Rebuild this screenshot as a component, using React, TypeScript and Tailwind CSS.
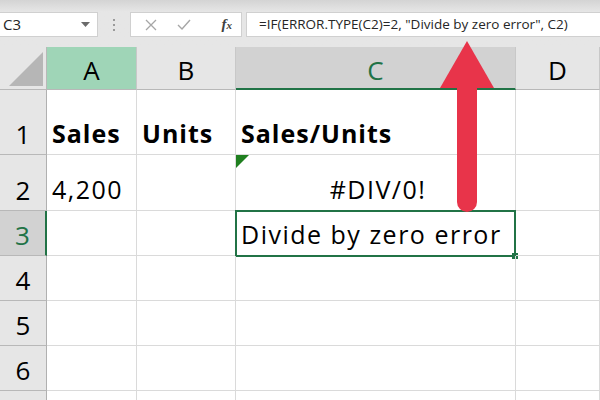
import React from "react";

const cols = ["A", "B", "C", "D"];

const rows: { n: number; h: string; cells: React.ReactNode[] }[] = [
  {
    n: 1,
    h: "h-[65px]",
    cells: [
      <span className="font-bold tracking-[1px]">Sales</span>,
      <span className="font-bold tracking-[1px]">Units</span>,
      <span className="font-bold tracking-[1px]">Sales/Units</span>,
      null,
    ],
  },
  { n: 2, h: "h-[56px]", cells: ["4,200", null, "#DIV/0!", null] },
  { n: 3, h: "h-[45px]", cells: [null, null, "Divide by zero error", null] },
  { n: 4, h: "h-[45px]", cells: [null, null, null, null] },
  { n: 5, h: "h-[45px]", cells: [null, null, null, null] },
  { n: 6, h: "h-[45px]", cells: [null, null, null, null] },
  { n: 7, h: "h-[45px]", cells: [null, null, null, null] },
];

function Toolbar() {
  return (
    <div className="h-[47px] bg-linear-to-b from-[#d4d4d4] via-[#e6e6e6] via-25% to-[#e6e6e6] flex items-start pt-[12px]">
      {/* name box */}
      <div className="w-[98px] h-[25px] bg-white border border-[#d0d0d0] border-l-0 flex items-center justify-between pl-[3px] pr-[7px]">
        <span className="text-[15px] text-[#262626] leading-none">C3</span>
        <svg width="9" height="5" viewBox="0 0 9 5">
          <polygon points="0,0 9,0 4.5,5" fill="#6b6b6b" />
        </svg>
      </div>
      <div className="w-[32px] h-[25px] flex flex-col items-center justify-center gap-[3px]">
        <div className="w-[2px] h-[2px] bg-[#9a9a9a]" />
        <div className="w-[2px] h-[2px] bg-[#9a9a9a]" />
        <div className="w-[2px] h-[2px] bg-[#9a9a9a]" />
      </div>
      {/* cancel / enter / fx */}
      <div className="w-[112px] h-[25px] bg-white border border-[#d0d0d0] flex items-center pl-[14px] pr-[9px]">
        <svg width="12" height="12" viewBox="0 0 12 12">
          <path d="M1 1 L11 11 M11 1 L1 11" stroke="#a6a6a6" strokeWidth="1.3" />
        </svg>
        <svg className="ml-[20px]" width="14" height="11" viewBox="0 0 14 11">
          <path d="M1 6 L5 10 L13 1" stroke="#a6a6a6" strokeWidth="1.4" fill="none" />
        </svg>
        <span className="ml-auto italic text-[15px] text-[#404040] leading-none font-['Liberation_Serif',serif] font-bold">
          f<span className="text-[11px]">x</span>
        </span>
      </div>
      {/* formula bar */}
      <div className="ml-[4px] flex-1 h-[25px] bg-white border border-[#d0d0d0] border-r-0 flex items-center pl-[12px]">
        <span className="text-[13.5px] text-[#262626] leading-none whitespace-nowrap">
          =IF(ERROR.TYPE(C2)=2, "Divide by zero error", C2)
        </span>
      </div>
    </div>
  );
}

export default function App() {
  return (
    <div className="w-[600px] h-[400px] overflow-hidden bg-white relative font-['Open_Sans',sans-serif] text-black">
      <Toolbar />
      <div className="grid grid-cols-[47px_90px_99px_280px_1fr]">
        {/* header row */}
        <div className="h-[43px] bg-[#e6e6e6] border-r border-b border-[#b8b8b8] flex items-end justify-end pr-[3px] pb-[3px]">
          <svg width="34" height="34" viewBox="0 0 34 34">
            <polygon points="34,0 34,34 0,34" fill="#b6b6b6" />
          </svg>
        </div>
        {cols.map((c) => (
          <div
            key={c}
            className={
              "h-[43px] flex items-center justify-center text-[26px] leading-none pt-[4px] border-r " +
              (c === "A"
                ? "bg-[#9fd5b7] border-[#c8c8c8] border-b border-b-[#b8b8b8]"
                : c === "C"
                ? "bg-[#d2d2d2] border-[#c8c8c8] border-b-2 border-b-[#217346] text-[#217346]"
                : "bg-[#e6e6e6] border-[#c8c8c8] border-b border-b-[#b8b8b8]")
            }
          >
            {c}
          </div>
        ))}
        {/* body rows */}
        {rows.map((r) => (
          <React.Fragment key={r.n}>
            <div
              className={
                r.h +
                " border-b border-[#b8b8b8] flex items-end justify-center pb-[7px] text-[26px] leading-none " +
                (r.n === 3
                  ? "bg-[#d2d2d2] text-[#217346] border-r-2 border-r-[#217346]"
                  : "bg-[#e6e6e6] border-r border-r-[#b0b0b0]")
              }
            >
              {r.n < 7 ? r.n : null}
            </div>
            {r.cells.map((cell, i) => (
              <div
                key={i}
                className={
                  r.h +
                  " relative border-r border-b border-[#dadada] flex items-end pb-[8px] pl-[5px] text-[25px] leading-none tracking-[1.5px] whitespace-nowrap " +
                  (r.n === 2 && i === 2 ? "justify-center pl-0" : "")
                }
              >
                {r.n === 2 && i === 2 && (
                  <svg className="absolute left-0 top-0" width="13" height="13" viewBox="0 0 13 13">
                    <polygon points="0,0 13,0 0,13" fill="#1f7f1f" />
                  </svg>
                )}
                {r.n === 3 && i === 2 && (
                  <div className="absolute -left-[1px] -top-[1px] -right-[1px] -bottom-[2px] border-2 border-[#217346]">
                    <div className="absolute -right-[4px] -bottom-[4px] w-[6px] h-[6px] bg-[#217346]" />
                  </div>
                )}
                {cell}
              </div>
            ))}
          </React.Fragment>
        ))}
      </div>
      {/* red arrow pointing at the formula */}
      <svg className="absolute left-0 top-0 pointer-events-none" width="600" height="400" viewBox="0 0 600 400">
        <rect x="457" y="80" width="20" height="132" rx="10" fill="#e8344a" />
        <rect x="457" y="80" width="20" height="40" fill="#e8344a" />
        <polygon points="440,88 494,88 467,41" fill="#e8344a" />
      </svg>
    </div>
  );
}
